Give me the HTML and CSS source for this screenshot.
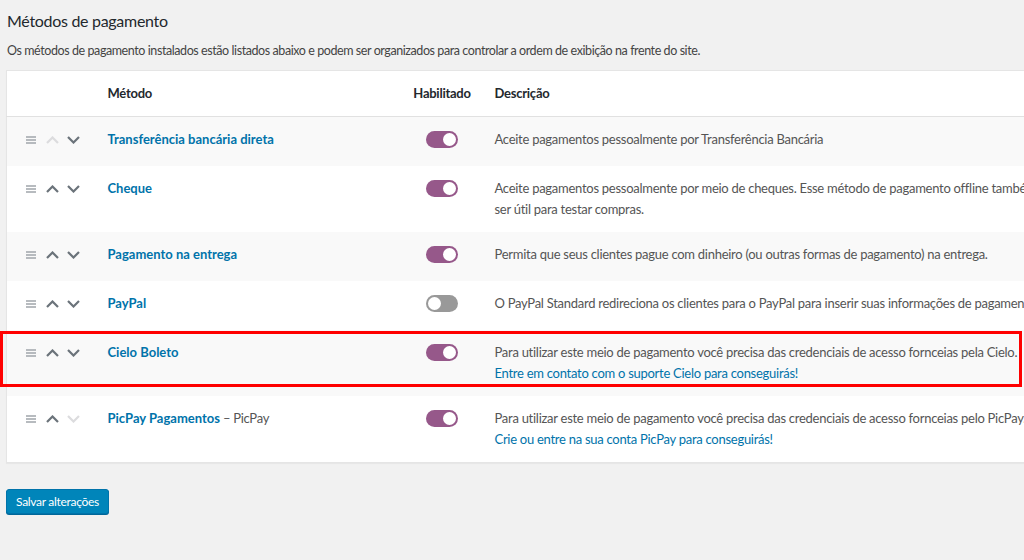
FILE: index.html
```html
<!DOCTYPE html>
<html lang="pt-BR">
<head>
<meta charset="utf-8">
<title>Métodos de pagamento</title>
<link rel="stylesheet" href="styles.css">
</head>
<body>
<div class="page">
  <h2 class="title">Métodos de pagamento</h2>
  <p class="intro">Os métodos de pagamento instalados estão listados abaixo e podem ser organizados para controlar a ordem de exibição na frente do site.</p>

  <table class="gateways">
    <colgroup>
      <col class="c-sort"><col class="c-name"><col class="c-status"><col class="c-desc">
    </colgroup>
    <thead>
      <tr>
        <th></th>
        <th class="name">Método</th>
        <th class="status">Habilitado</th>
        <th class="desc">Descrição</th>
      </tr>
    </thead>
    <tbody>
      <tr>
        <td class="sort"><span class="handles"><svg class="ham" width="10" height="8" viewBox="0 0 10 8"><path d="M0 1h10M0 4h10M0 7h10"/></svg><svg class="chev off" width="13" height="8" viewBox="0 0 13 8"><path d="M1 7L6.5 1.5L12 7"/></svg><svg class="chev" width="13" height="8" viewBox="0 0 13 8"><path d="M1 1L6.5 6.5L12 1"/></svg></span></td>
        <td class="name"><a href="#">Transferência bancária direta</a></td>
        <td class="status"><span class="toggle on"></span></td>
        <td class="desc">Aceite pagamentos pessoalmente por Transferência Bancária</td>
      </tr>
      <tr>
        <td class="sort"><span class="handles"><svg class="ham" width="10" height="8" viewBox="0 0 10 8"><path d="M0 1h10M0 4h10M0 7h10"/></svg><svg class="chev" width="13" height="8" viewBox="0 0 13 8"><path d="M1 7L6.5 1.5L12 7"/></svg><svg class="chev" width="13" height="8" viewBox="0 0 13 8"><path d="M1 1L6.5 6.5L12 1"/></svg></span></td>
        <td class="name"><a href="#">Cheque</a></td>
        <td class="status"><span class="toggle on"></span></td>
        <td class="desc">Aceite pagamentos pessoalmente por meio de cheques. Esse método de pagamento offline também pode<br>ser útil para testar compras.</td>
      </tr>
      <tr>
        <td class="sort"><span class="handles"><svg class="ham" width="10" height="8" viewBox="0 0 10 8"><path d="M0 1h10M0 4h10M0 7h10"/></svg><svg class="chev" width="13" height="8" viewBox="0 0 13 8"><path d="M1 7L6.5 1.5L12 7"/></svg><svg class="chev" width="13" height="8" viewBox="0 0 13 8"><path d="M1 1L6.5 6.5L12 1"/></svg></span></td>
        <td class="name"><a href="#">Pagamento na entrega</a></td>
        <td class="status"><span class="toggle on"></span></td>
        <td class="desc">Permita que seus clientes pague com dinheiro (ou outras formas de pagamento) na entrega.</td>
      </tr>
      <tr>
        <td class="sort"><span class="handles"><svg class="ham" width="10" height="8" viewBox="0 0 10 8"><path d="M0 1h10M0 4h10M0 7h10"/></svg><svg class="chev" width="13" height="8" viewBox="0 0 13 8"><path d="M1 7L6.5 1.5L12 7"/></svg><svg class="chev" width="13" height="8" viewBox="0 0 13 8"><path d="M1 1L6.5 6.5L12 1"/></svg></span></td>
        <td class="name"><a href="#">PayPal</a></td>
        <td class="status"><span class="toggle"></span></td>
        <td class="desc">O PayPal Standard redireciona os clientes para o PayPal para inserir suas informações de pagamento.</td>
      </tr>
      <tr>
        <td class="sort"><span class="handles"><svg class="ham" width="10" height="8" viewBox="0 0 10 8"><path d="M0 1h10M0 4h10M0 7h10"/></svg><svg class="chev" width="13" height="8" viewBox="0 0 13 8"><path d="M1 7L6.5 1.5L12 7"/></svg><svg class="chev" width="13" height="8" viewBox="0 0 13 8"><path d="M1 1L6.5 6.5L12 1"/></svg></span></td>
        <td class="name"><a href="#">Cielo Boleto</a></td>
        <td class="status"><span class="toggle on"></span></td>
        <td class="desc">Para utilizar este meio de pagamento você precisa das credenciais de acesso fornceias pela Cielo.<br><a href="#">Entre em contato com o suporte Cielo para conseguirás!</a></td>
      </tr>
      <tr>
        <td class="sort"><span class="handles"><svg class="ham" width="10" height="8" viewBox="0 0 10 8"><path d="M0 1h10M0 4h10M0 7h10"/></svg><svg class="chev" width="13" height="8" viewBox="0 0 13 8"><path d="M1 7L6.5 1.5L12 7"/></svg><svg class="chev off" width="13" height="8" viewBox="0 0 13 8"><path d="M1 1L6.5 6.5L12 1"/></svg></span></td>
        <td class="name"><a href="#">PicPay Pagamentos</a><span class="sub"> – PicPay</span></td>
        <td class="status"><span class="toggle on"></span></td>
        <td class="desc">Para utilizar este meio de pagamento você precisa das credenciais de acesso fornceias pelo PicPay.<br><a href="#">Crie ou entre na sua conta PicPay para conseguirás!</a></td>
      </tr>
    </tbody>
  </table>

  <div class="actions">
    <button class="save" type="button">Salvar alterações</button>
  </div>

  <div class="highlight"></div>
</div>
</body>
</html>
```

FILE: styles.css
```css
html, body {
  margin: 0;
  padding: 0;
  overflow: hidden;
}

body {
  background: #f1f1f1;
  color: #444;
  font-family: "Lato", "Open Sans", sans-serif;
  font-size: 13px;
  height: 560px;
}

.page {
  position: relative;
  padding: 9px 0 0 6px;
  width: 1018px;
  height: 551px;
  overflow: hidden;
}

.title {
  margin: 0 0 0 1px;
  font-size: 16px;
  letter-spacing: -0.3px;
  line-height: 23px;
  font-weight: 400;
  color: #23282d;
}

.intro {
  margin: 8px 0 0 1px;
  font-size: 12.5px;
  letter-spacing: -0.42px;
  line-height: 21px;
  color: #444;
}

.gateways {
  margin-top: 9px;
  width: 1300px;
  table-layout: fixed;
  border-collapse: collapse;
  background: #fff;
  border: 1px solid #e5e5e5;
  box-shadow: 0 1px 1px rgba(0, 0, 0, 0.04);
}

.c-sort { width: 91px; }
.c-name { width: 302px; }
.c-status { width: 85px; }

.gateways th,
.gateways td {
  padding: 12px 10px;
  line-height: 21px;
  vertical-align: top;
  text-align: left;
}

.gateways th {
  font-weight: 700;
  letter-spacing: -0.25px;
  color: #23282d;
  border-bottom: 1px solid #e1e1e1;
}

.gateways .status {
  text-align: center;
}

.gateways tbody tr:nth-child(odd) {
  background: #f9f9f9;
}

.gateways td.desc {
  white-space: nowrap;
  letter-spacing: -0.27px;
  color: #555;
}

.gateways td.sort {
  padding-left: 19px;
  padding-right: 0;
}

.handles {
  display: flex;
  align-items: center;
  height: 21px;
  margin-bottom: 4px;
}

.ham {
  stroke: #a0a5aa;
  stroke-width: 1.6;
  fill: none;
  margin-right: 10px;
}

.chev {
  stroke: #6b737a;
  stroke-width: 2.2;
  fill: none;
  margin-right: 8px;
}

.chev.off {
  stroke: #dcdcde;
}

a {
  color: #0073aa;
  text-decoration: none;
}

.name a {
  font-weight: 700;
}

.sub {
  color: #555;
  letter-spacing: -0.3px;
}

.toggle {
  display: inline-block;
  vertical-align: top;
  position: relative;
  box-sizing: border-box;
  width: 32px;
  height: 17px;
  margin-top: 2px;
  border-radius: 9px;
  background: #999;
}

.toggle::after {
  content: "";
  position: absolute;
  top: 2px;
  left: 2px;
  width: 13px;
  height: 13px;
  border-radius: 50%;
  background: #fff;
}

.toggle.on {
  background: #96588a;
}

.toggle.on::after {
  left: auto;
  right: 2px;
}

.actions {
  margin-top: 26px;
}

.save {
  box-sizing: border-box;
  height: 25px;
  padding: 0 9px;
  font-family: inherit;
  font-size: 12px;
  letter-spacing: -0.3px;
  color: #fff;
  background: #0085ba;
  border: 1px solid #0073aa;
  border-radius: 3px;
  box-shadow: 0 1px 0 #006799;
  cursor: pointer;
}

.highlight {
  position: absolute;
  left: 0;
  top: 331px;
  width: 1022px;
  height: 56px;
  box-sizing: border-box;
  border: 3px solid #ff0000;
  pointer-events: none;
}
```
